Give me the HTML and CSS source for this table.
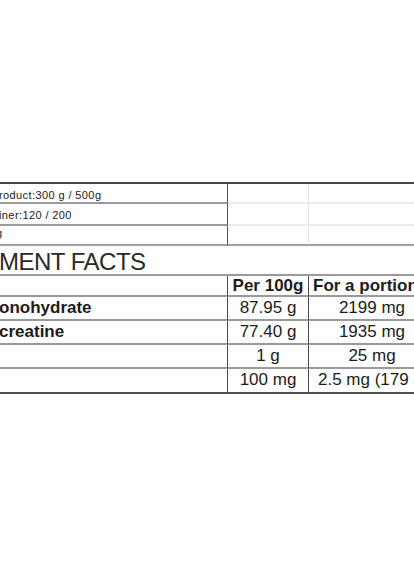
FILE: index.html
```html
<!DOCTYPE html>
<html>
<head>
<meta charset="utf-8">
<link rel="stylesheet" href="styles.css">
</head>
<body>
<div class="sheet">
  <div class="info">
    <div class="cell lc r1"><span class="small">roduct:300 g / 500g</span></div>
    <div class="cell mc r1"></div>
    <div class="cell rc r1"></div>
    <div class="cell lc r2"><span class="small">iner:120 / 200</span></div>
    <div class="cell mc r2"></div>
    <div class="cell rc r2"></div>
    <div class="cell lc r3 last"><span class="small cut">g</span></div>
    <div class="cell mc r3 last"></div>
    <div class="cell rc r3 last"></div>
  </div>
  <div class="title">MENT FACTS</div>
  <div class="facts">
    <div class="fc fl h"></div>
    <div class="fc fm h b">Per 100g</div>
    <div class="fc fr h b left">For a portion</div>

    <div class="fc fl b">onohydrate</div>
    <div class="fc fm">87.95 g</div>
    <div class="fc fr">2199 mg</div>

    <div class="fc fl b">creatine</div>
    <div class="fc fm">77.40 g</div>
    <div class="fc fr">1935 mg</div>

    <div class="fc fl"></div>
    <div class="fc fm">1 g</div>
    <div class="fc fr">25 mg</div>

    <div class="fc fl end"></div>
    <div class="fc fm end">100 mg</div>
    <div class="fc fr end left2">2.5 mg (179 mg)</div>
  </div>
</div>
</body>
</html>
```

FILE: styles.css
```css
html, body {
  margin: 0;
  padding: 0;
  background: #fff;
}

.sheet {
  width: 414px;
  height: 576px;
  overflow: hidden;
  background: #fff;
  padding-top: 182px;
  box-sizing: border-box;
  font-family: "Liberation Sans", Arial, sans-serif;
  color: #1c1c1c;
}

.info {
  display: grid;
  grid-template-columns: 228px 81px 126px;
  border-top: 2px solid #454545;
}

.cell {
  box-sizing: border-box;
  white-space: nowrap;
  overflow: hidden;
}

.r1 { height: 20px; }
.r2 { height: 22px; }
.r3 { height: 20px; }

.lc {
  border-right: 1px solid #555;
  border-bottom: 2px solid #9a9a9a;
  padding-top: 4px;
}

.mc {
  border-right: 1px solid #e2e2e2;
  border-bottom: 2px solid #ececec;
}

.rc {
  border-bottom: 2px solid #ececec;
}

.last {
  border-bottom: 2px solid #a0a0a0;
}

.small {
  display: block;
  font-size: 11px;
  letter-spacing: 0.4px;
  line-height: 14px;
  margin-left: -1px;
  color: #222;
}

.cut {
  margin-left: -4px;
  margin-top: -4px;
}

.title {
  height: 28px;
  font-size: 24px;
  letter-spacing: -0.5px;
  line-height: 29px;
  padding-top: 1px;
  margin-left: -1px;
  color: #2a2a2a;
  white-space: nowrap;
  box-sizing: border-box;
}

.facts {
  display: grid;
  grid-template-columns: 228px 81px 126px;
  border-top: 2px solid #9a9a9a;
}

.fc {
  box-sizing: border-box;
  height: 24px;
  border-bottom: 2px solid #9a9a9a;
  font-size: 17px;
  line-height: 22px;
  white-space: nowrap;
  overflow: hidden;
  text-align: center;
}

.fc.h {
  height: 21px;
  line-height: 19px;
}

.fl {
  border-right: 1px solid #4d4d4d;
  text-align: left;
  margin-left: -1px;
}

.fm {
  border-right: 1px solid #4d4d4d;
}

.b {
  font-weight: bold;
}

.left {
  text-align: left;
  padding-left: 4px;
}

.left2 {
  text-align: left;
  padding-left: 9px;
}

.end {
  height: 25px;
  border-bottom: 2px solid #505050;
}
```
